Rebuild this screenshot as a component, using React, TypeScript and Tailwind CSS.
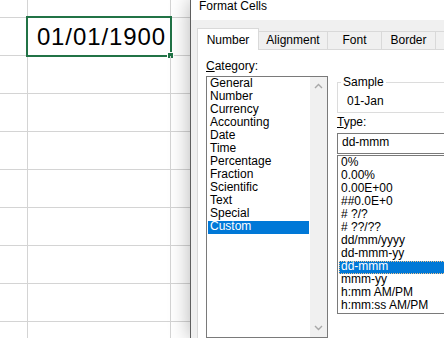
import React from 'react';

const categories = ['General', 'Number', 'Currency', 'Accounting', 'Date', 'Time', 'Percentage', 'Fraction', 'Scientific', 'Text', 'Special', 'Custom'];
const types = ['0%', '0.00%', '0.00E+00', '##0.0E+0', '# ?/?', '# ??/??', 'dd/mm/yyyy', 'dd-mmm-yy', 'dd-mmm', 'mmm-yy', 'h:mm AM/PM', 'h:mm:ss AM/PM'];
const tabs = [
  { label: 'Alignment', w: 'w-[70px]' },
  { label: 'Font', w: 'w-[55px]' },
  { label: 'Border', w: 'w-[55px]' },
  { label: '', w: 'w-[60px]' },
];

function Chevron({ up }: { up?: boolean }) {
  return (
    <svg width="9" height="6" viewBox="0 0 9 6" className="mx-auto">
      <polyline points={up ? '1,5 4.5,1.5 8,5' : '1,1 4.5,4.5 8,1'} fill="none" stroke="#a8a8a8" strokeWidth="1.4" />
    </svg>
  );
}

function Sheet() {
  const rows = Array.from({ length: 9 });
  return (
    <div className="w-[190px] shrink-0 bg-white">
      <div className="flex h-[18px] border-b border-[#d4d4d4]">
        <div className="w-[28px] border-r border-[#d4d4d4]" />
        <div className="w-[143px] border-r border-[#d4d4d4]" />
      </div>
      {rows.map((_, i) => (
        <div key={i} className="flex h-[38px] border-b border-[#d4d4d4]">
          <div className="w-[28px] border-r border-[#d4d4d4]" />
          <div className="relative w-[143px] border-r border-[#d4d4d4]">
            {i === 0 && (
              <>
                <div className="flex justify-end pt-[7px] pr-[4px] font-['Liberation_Sans',Arial,sans-serif] text-[24px] leading-[24px] tracking-[0.9px] text-black">
                  01/01/1900
                </div>
                <div className="absolute -inset-[2px] border-2 border-[#217346]">
                  <div className="absolute -right-[4px] -bottom-[4px] w-[7px] h-[7px] bg-[#217346] border border-white" />
                </div>
              </>
            )}
          </div>
        </div>
      ))}
    </div>
  );
}

export default function App() {
  return (
    <div className="w-[444px] h-[338px] overflow-hidden flex bg-white font-['Liberation_Sans',Arial,sans-serif] text-[12px] text-black">
      <Sheet />

      <div className="relative w-[420px] shrink-0 flex flex-col border-l border-[#5f5f5f] shadow-[0_0_20px_rgba(0,0,0,0.3)]">
        <div className="h-[20px] shrink-0 bg-white pl-[8px] leading-[12px]">Format Cells</div>

        <div className="flex-1 flex flex-col bg-[#f0f0f0] pl-[6px] pt-[8px]">
          {/* tabs */}
          <div className="flex items-end h-[21px] shrink-0">
            <div className="relative z-10 shrink-0 w-[62px] h-[22px] -mb-px bg-white border border-b-0 border-[#d9d9d9] pt-[5px] text-center leading-[13px]">
              Number
            </div>
            {tabs.map((t, i) => (
              <div key={i} className={`${t.w} h-[18px] -ml-px shrink-0 bg-[#f0f0f0] border border-b-0 border-[#d9d9d9] pt-[2px] text-center leading-[13px]`}>
                {t.label}
              </div>
            ))}
          </div>

          {/* panel */}
          <div className="flex-1 flex gap-[9px] bg-white border-t border-l border-[#d9d9d9] pl-[8px]">
            <div className="w-[122px] shrink-0">
              <div className="mt-[10px] leading-[13px]"><span className="underline">C</span>ategory:</div>
              <div className="mt-[3px] h-[262px] flex border border-[#7a7a7a]">
                <div className="flex-1 p-[1px]">
                  {categories.map(c => (
                    <div key={c} className={`h-[13px] leading-[11px] pl-[2px] ${c === 'Custom' ? 'bg-[#0078d7] text-white' : ''}`}>{c}</div>
                  ))}
                </div>
                <div className="w-[17px] bg-[#f0f0f0] flex flex-col justify-between py-[6px]">
                  <Chevron up />
                  <Chevron />
                </div>
              </div>
            </div>

            <div className="flex-1 flex flex-col pr-[8px]">
              <fieldset className="mt-[26px] border border-[#dcdcdc]">
                <legend className="ml-[3px] px-[2px] leading-[13px]">Sample</legend>
                <div className="h-[23px] pl-[9px] pt-[6px] leading-[13px]">01-Jan</div>
              </fieldset>
              <div className="mt-[3px] leading-[13px]"><span className="underline">T</span>ype:</div>
              <div className="mt-[4px] h-[21px] border border-[#7a7a7a] pl-[4px] pt-[2px] leading-[13px]">dd-mmm</div>
              <div className="mt-[1px] h-[159px] border border-[#7a7a7a] p-[1px]">
                {types.map(t => (
                  <div key={t} className={`h-[13px] leading-[11px] pl-[2px] ${t === 'dd-mmm' ? 'bg-[#0078d7] text-white outline outline-1 outline-dotted outline-[#f2c48e] -outline-offset-1' : ''}`}>{t}</div>
                ))}
              </div>
            </div>
          </div>
        </div>
      </div>
    </div>
  );
}
